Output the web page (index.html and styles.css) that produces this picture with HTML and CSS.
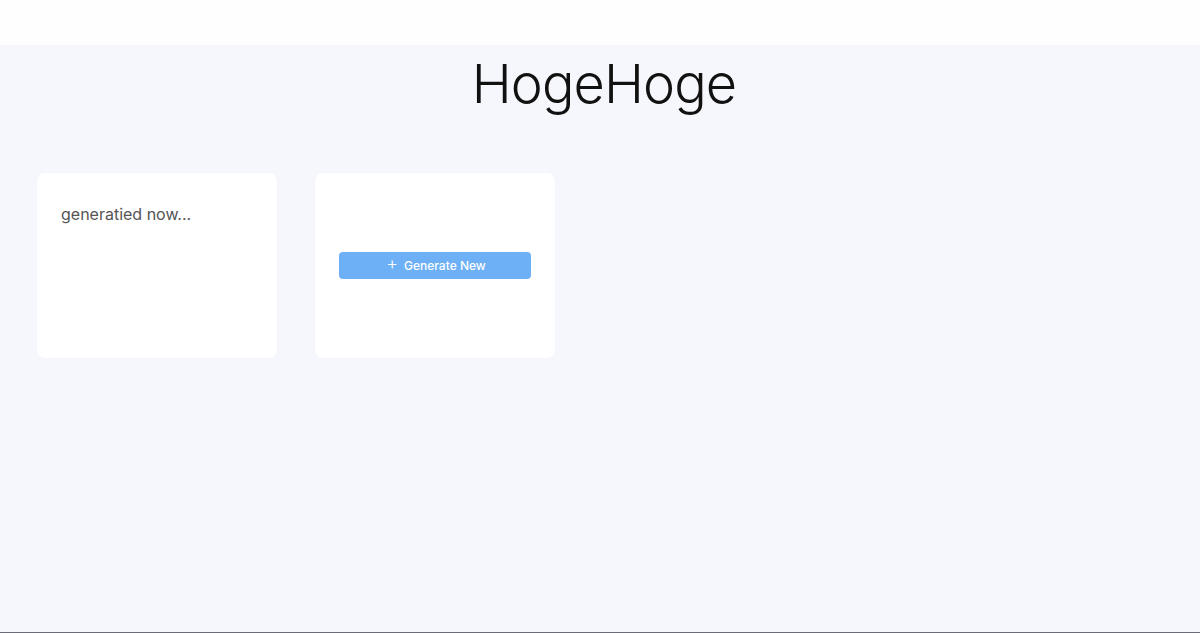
FILE: index.html
```html
<!DOCTYPE html>
<html>
<head>
<meta charset="utf-8">
<link rel="stylesheet" href="styles.css">
</head>
<body>
<div class="topbar"></div>
<main class="main">
  <h1 class="title">HogeHoge</h1>
  <div class="cards">
    <div class="card">
      <p class="card-text">generatied now...</p>
    </div>
    <div class="card card-center">
      <button class="gen-btn"><span class="plus">+</span>Generate New</button>
    </div>
  </div>
</main>
</body>
</html>
```
FILE: styles.css
```css
html, body {
  margin: 0;
  padding: 0;
  height: 100%;
}
body {
  font-family: Inter, "Liberation Sans", sans-serif;
  background: #f6f7fc;
  display: flex;
  flex-direction: column;
  overflow: hidden;
}
.topbar {
  height: 45px;
  background: #fefefe;
  flex: none;
}
.main {
  flex: 1;
  border-bottom: 1px solid #6b6b78;
}
.title {
  margin: 9px 0 0;
  padding-left: 8px;
  text-align: center;
  font-weight: 300;
  font-size: 54px;
  line-height: 60px;
  color: #111;
  letter-spacing: -0.9px;
}
.cards {
  display: flex;
  gap: 38px;
  padding: 59px 0 0 37px;
}
.card {
  width: 240px;
  height: 185px;
  background: #fff;
  border-radius: 7px;
  box-shadow: 0 0 1px rgba(0,0,0,0.06);
  box-sizing: border-box;
  padding: 30px 24px;
}
.card-text {
  margin: 0;
  font-size: 16px;
  color: #555;
  line-height: 22px;
}
.card-center {
  display: flex;
  align-items: center;
  justify-content: center;
  padding: 0 24px;
}
.gen-btn {
  width: 192px;
  height: 27px;
  border: none;
  border-radius: 4px;
  background: #6db0f6;
  color: #fff;
  font-family: Inter, "Liberation Sans", sans-serif;
  font-size: 12px;
  font-weight: 500;
  display: flex;
  align-items: center;
  justify-content: center;
  gap: 6px;
  padding: 0 0 0 2px;
}
.plus {
  font-size: 18px;
  font-weight: 300;
  line-height: 1;
  margin-top: -3px;
}
```
